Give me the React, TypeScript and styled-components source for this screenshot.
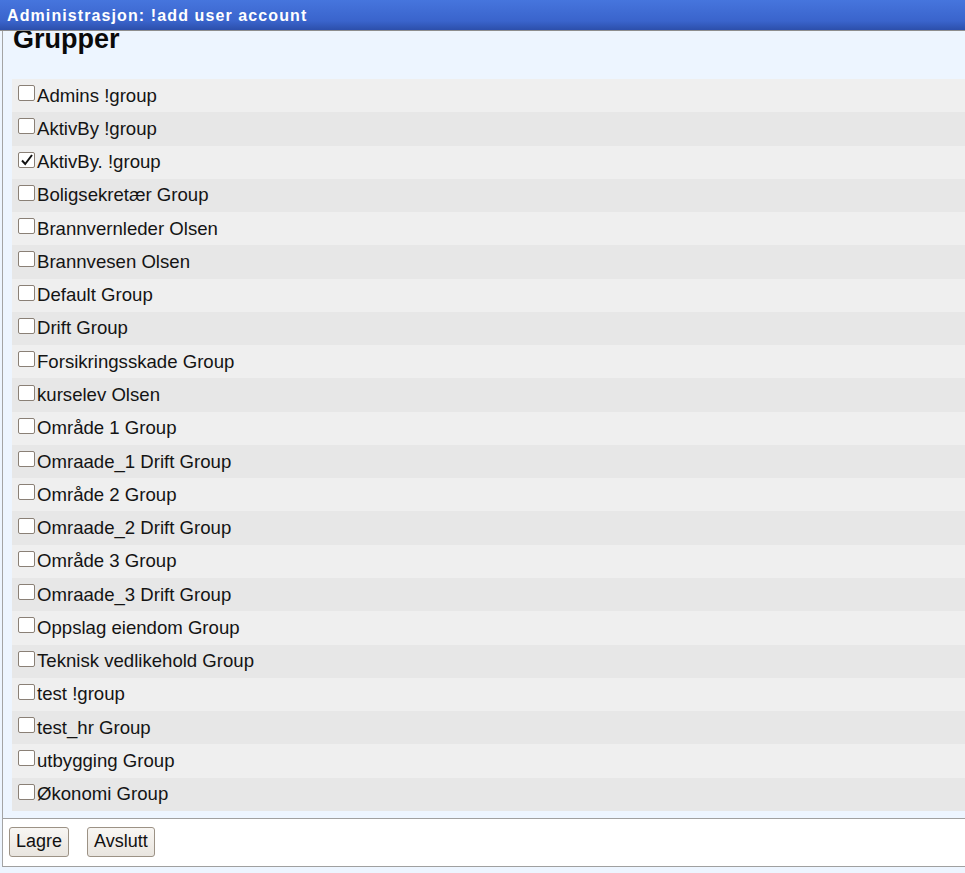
import styled, { createGlobalStyle } from "styled-components";

const groups: { name: string; checked?: boolean }[] = [
    { name: "Admins !group" },
    { name: "AktivBy !group" },
    { name: "AktivBy. !group", checked: true },
    { name: "Boligsekretær Group" },
    { name: "Brannvernleder Olsen" },
    { name: "Brannvesen Olsen" },
    { name: "Default Group" },
    { name: "Drift Group" },
    { name: "Forsikringsskade Group" },
    { name: "kurselev Olsen" },
    { name: "Område 1 Group" },
    { name: "Omraade_1 Drift Group" },
    { name: "Område 2 Group" },
    { name: "Omraade_2 Drift Group" },
    { name: "Område 3 Group" },
    { name: "Omraade_3 Drift Group" },
    { name: "Oppslag eiendom Group" },
    { name: "Teknisk vedlikehold Group" },
    { name: "test !group" },
    { name: "test_hr Group" },
    { name: "utbygging Group" },
    { name: "Økonomi Group" },
];

const App = () => {
    return (
        <>
            <GlobalStyle />
            <TitleBar>Administrasjon: !add user account</TitleBar>
            <Frame>
                <Content>
                    <Heading>Grupper</Heading>
                    <GroupList>
                        {groups.map((group, i) => (
                            <GroupRow key={group.name} $odd={i % 2 === 1}>
                                <CheckBox>
                                    {group.checked && (
                                        <svg width="14" height="14" viewBox="0 0 14 14">
                                            <path
                                                d="M2 7.5 L5.2 11 L12 2"
                                                fill="none"
                                                stroke="#111"
                                                strokeWidth="2"
                                            />
                                        </svg>
                                    )}
                                </CheckBox>
                                <span>{group.name}</span>
                            </GroupRow>
                        ))}
                    </GroupList>
                </Content>
                <Footer>
                    <Button>Lagre</Button>
                    <Button>Avslutt</Button>
                </Footer>
            </Frame>
        </>
    );
};

const GlobalStyle = createGlobalStyle`
    body {
        margin: 0;
        background: #edf5ff;
        font-family: "Liberation Sans", Arial, sans-serif;
        color: #111;
    }
`;

const TitleBar = styled.header`
    height: 31px;
    padding: 1px 0 0 7px;
    box-sizing: border-box;
    line-height: 30px;
    background: linear-gradient(#4675dd, #3a64cc 70%, #2c4fab);
    border-bottom: 1px solid #8e8e8e;
    color: #fff;
    font-weight: 700;
    font-size: 16px;
    letter-spacing: 1.1px;
`;

const Frame = styled.main`
    margin-left: 2px;
    border-left: 1px solid #a4a4a4;
`;

const Content = styled.section`
    overflow: hidden;
    padding: 0 0 7px 9px;
    background: #edf5ff;
`;

const Heading = styled.h2`
    margin: -7px 0 24px 1px;
    font-size: 27px;
    line-height: 31px;
    font-weight: 700;
    color: #0a0a0a;
`;

const GroupList = styled.div`
    display: flex;
    flex-direction: column;
`;

const GroupRow = styled.label<{ $odd: boolean }>`
    display: flex;
    align-items: center;
    height: 33.27px;
    padding-left: 6px;
    background: ${(p) => (p.$odd ? "#e7e7e7" : "#efefef")};
    font-size: 18.6px;
    color: #141414;
`;

const CheckBox = styled.span`
    display: flex;
    align-items: center;
    justify-content: center;
    width: 17px;
    height: 16px;
    box-sizing: border-box;
    margin: 0 2px 5px 0;
    border: 1px solid #8a8076;
    border-radius: 2px;
    background: #fff;
`;

const Footer = styled.footer`
    display: flex;
    gap: 18px;
    padding: 8px 0 9px 6px;
    background: #fff;
    border-top: 1px solid #a0a0a0;
    border-bottom: 1px solid #a0a0a0;
`;

const Button = styled.button`
    height: 30px;
    padding: 0 6px;
    font-family: "Liberation Sans", Arial, sans-serif;
    font-size: 18px;
    color: #111;
    background: linear-gradient(#f8f6f3, #e9e5df);
    border: 1px solid #9c9285;
    border-radius: 3px;
`;

export default App;
